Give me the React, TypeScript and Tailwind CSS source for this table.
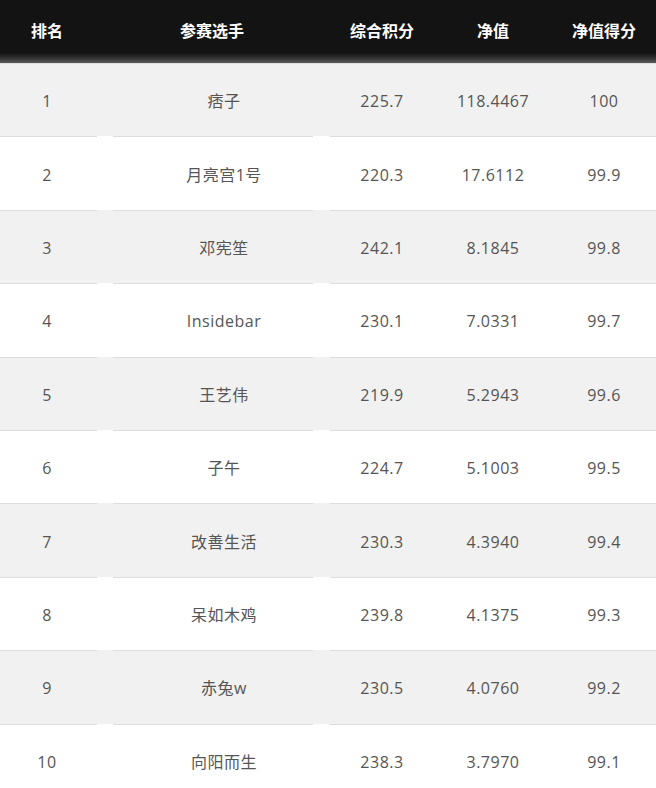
const rows = [
  { rank: 1, name: "痞子", score: "225.7", nav: "118.4467", navScore: "100" },
  { rank: 2, name: "月亮宫1号", score: "220.3", nav: "17.6112", navScore: "99.9" },
  { rank: 3, name: "邓宪笙", score: "242.1", nav: "8.1845", navScore: "99.8" },
  { rank: 4, name: "Insidebar", score: "230.1", nav: "7.0331", navScore: "99.7" },
  { rank: 5, name: "王艺伟", score: "219.9", nav: "5.2943", navScore: "99.6" },
  { rank: 6, name: "子午", score: "224.7", nav: "5.1003", navScore: "99.5" },
  { rank: 7, name: "改善生活", score: "230.3", nav: "4.3940", navScore: "99.4" },
  { rank: 8, name: "呆如木鸡", score: "239.8", nav: "4.1375", navScore: "99.3" },
  { rank: 9, name: "赤兔w", score: "230.5", nav: "4.0760", navScore: "99.2" },
  { rank: 10, name: "向阳而生", score: "238.3", nav: "3.7970", navScore: "99.1" },
];

const cols = "grid grid-cols-[94px_236px_104px_118px_104px]";

export default function App() {
  return (
    <div className="w-[656px] h-[788px] overflow-hidden bg-white font-['Open_Sans','Noto_Sans_CJK_SC',sans-serif]">
      {/* Header */}
      <div
        className={`${cols} h-[63px] items-center bg-[linear-gradient(to_bottom,#131313_0%,#131313_84%,#3a3a3a_94%,#5e5e5e_100%)] text-white text-[16px] font-bold text-center font-['Noto_Sans_CJK_SC',sans-serif]`}
      >
        <span className="-mt-[3px]">排名</span>
        <span className="-mt-[3px]">参赛选手</span>
        <span className="-mt-[3px]">综合积分</span>
        <span className="-mt-[3px]">净值</span>
        <span className="-mt-[3px]">净值得分</span>
      </div>

      {/* Rows */}
      {rows.map((r, i) => (
        <div key={r.rank} className={i % 2 === 0 ? "bg-[#f1f1f1]" : "bg-white"}>
          {i === 0 ? (
            <div className="h-px bg-[#dfe0e4]" />
          ) : (
            <div className="flex h-px">
              <div className="w-[97px] bg-[#dcdde1]" />
              <div className="w-[16px]" />
              <div className="w-[200px] bg-[#dcdde1]" />
              <div className="w-[17px]" />
              <div className="flex-1 bg-[#dcdde1]" />
            </div>
          )}
          <div className={`${cols} h-[72.4px] items-center pt-[2px] text-center text-[16px] tracking-[0.5px] text-[#555]`}>
            <span>{r.rank}</span>
            <span className="pl-[24px]">{r.name}</span>
            <span>{r.score}</span>
            <span>{r.nav}</span>
            <span>{r.navScore}</span>
          </div>
        </div>
      ))}
    </div>
  );
}
